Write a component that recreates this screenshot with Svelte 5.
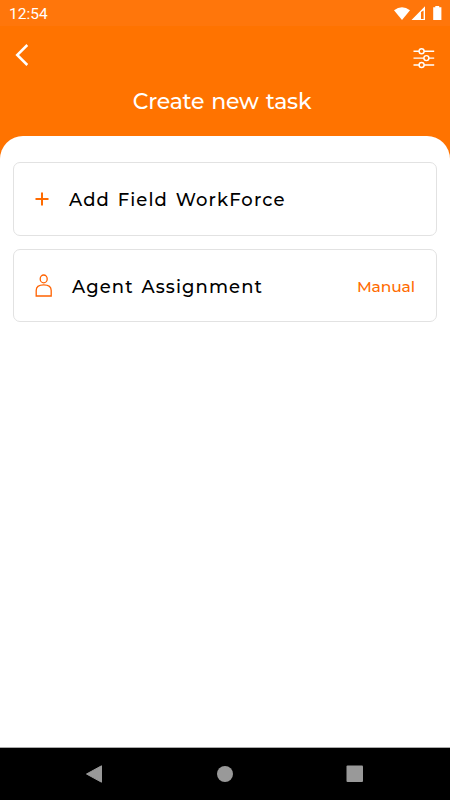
<script lang="ts">
  const rows = [
    { icon: "plus", label: "Add Field WorkForce", value: "" },
    { icon: "agent", label: "Agent Assignment", value: "Manual" },
  ];
</script>

<div class="screen">
  <div class="status">
    <span>12:54</span>
    <svg width="50" height="16" viewBox="0 0 50 16" fill="#fff">
      <path d="M1 4.2Q9 -1.7 17 4.2L9 14Z" />
      <path fill-rule="evenodd" d="M32 .3V14H18.5ZM28 6V13H30.6V4.5Z" />
      <path d="M40.2 1.3H42.3V0H46.2V1.3H48.4V14H40.2Z" />
    </svg>
  </div>

  <header>
    <div class="toolbar">
      <button type="button" aria-label="back">
        <svg width="14" height="22" viewBox="0 0 14 22">
          <path d="M12.3 1L2.2 11L12.3 21" fill="none" stroke="#fff" stroke-width="2.5" />
        </svg>
      </button>
      <button type="button" aria-label="filters">
        <svg width="22" height="22" viewBox="0 0 22 22" fill="none" stroke="#fff" stroke-width="1.4">
          <path d="M.5 4.3H6.2M11 4.3H21.2M.5 11.1H11M15.8 11.1H21.2M.5 18H6.2M11 18H21.2" />
          <circle cx="8.6" cy="4.3" r="2.5" />
          <circle cx="13.4" cy="11.1" r="2.5" />
          <circle cx="8.6" cy="18" r="2.5" />
        </svg>
      </button>
    </div>
    <h1>Create new task</h1>
  </header>

  <main>
    {#each rows as row}
      <div class="card {row.icon}">
        {#if row.icon === "plus"}
          <svg width="14" height="14" viewBox="0 0 14 14">
            <path d="M7 .5V13.5M.5 7H13.5" stroke="#ff6b00" stroke-width="2" />
          </svg>
        {:else}
          <svg width="17" height="24" viewBox="0 0 17 24" fill="none" stroke="#ff6200" stroke-width="1.3">
            <ellipse cx="8.7" cy="4.9" rx="3.5" ry="3.9" />
            <path d="M1.2 22V16.6C1.2 12.7 4.2 10.9 8.7 10.9S16.2 12.7 16.2 16.6V22Z" />
          </svg>
        {/if}
        <span class="label">{row.label}</span>
        {#if row.value}
          <span class="value">{row.value}</span>
        {/if}
      </div>
    {/each}
  </main>

  <nav>
    <svg width="18" height="18" viewBox="0 0 18 18">
      <path d="M16.5 .8V17.2L1.5 9Z" fill="#999" stroke="#999" stroke-linejoin="round" />
    </svg>
    <svg width="18" height="18" viewBox="0 0 18 18">
      <circle cx="9" cy="9" r="8" fill="#999" />
    </svg>
    <svg width="18" height="18" viewBox="0 0 18 18">
      <rect x=".5" y=".5" width="16.5" height="16.5" rx="1" fill="#999" />
    </svg>
  </nav>
</div>

<style>
  :global(body) {
    margin: 0;
  }

  .screen {
    width: 450px;
    height: 800px;
    display: flex;
    flex-direction: column;
    background: #ff7300;
    font-family: Montserrat, Inter, sans-serif;
  }

  svg {
    display: block;
    flex: none;
  }

  .status {
    box-sizing: border-box;
    height: 26px;
    padding: 6px 7px 0 9px;
    display: flex;
    justify-content: space-between;
    background: #ff760b;
    color: #fff;
    font: 15.5px/16px Roboto, sans-serif;
  }

  header {
    height: 110px;
    color: #fff;
  }

  .toolbar {
    height: 62px;
    padding: 0 15px;
    display: flex;
    justify-content: space-between;
    align-items: center;
  }

  .toolbar button {
    padding: 0;
    border: none;
    background: transparent;
  }

  .toolbar button:first-child {
    margin-bottom: 5px;
  }

  .toolbar button:last-child {
    margin-top: 2px;
  }

  h1 {
    margin: 0 0 0 -6px;
    text-align: center;
    font-size: 22px;
    line-height: 28px;
    font-weight: 500;
    letter-spacing: -0.25px;
    word-spacing: 1.5px;
  }

  main {
    flex: 1;
    padding: 26px 13px 0;
    display: flex;
    flex-direction: column;
    gap: 13px;
    background: #fff;
    border-radius: 23px 23px 0 0;
  }

  .card {
    box-sizing: border-box;
    height: 74px;
    padding: 0 21px;
    display: flex;
    align-items: center;
    border: 1px solid #e2e2e2;
    border-radius: 7px;
  }

  .card.agent {
    height: 73px;
  }

  .label {
    margin-left: 20px;
    padding-top: 2px;
    color: #000;
    font-size: 18px;
    font-weight: 500;
    letter-spacing: 1.1px;
    word-spacing: 1.8px;
    white-space: nowrap;
  }

  .value {
    margin-left: auto;
    padding-top: 1px;
    color: #ff6b00;
    font-size: 15.5px;
    font-weight: 500;
    letter-spacing: -0.1px;
  }

  nav {
    box-sizing: border-box;
    height: 53px;
    padding: 0 86px 0 85px;
    display: flex;
    justify-content: space-between;
    align-items: center;
    background: #000;
    border-top: 1px solid #aaa;
  }
</style>
